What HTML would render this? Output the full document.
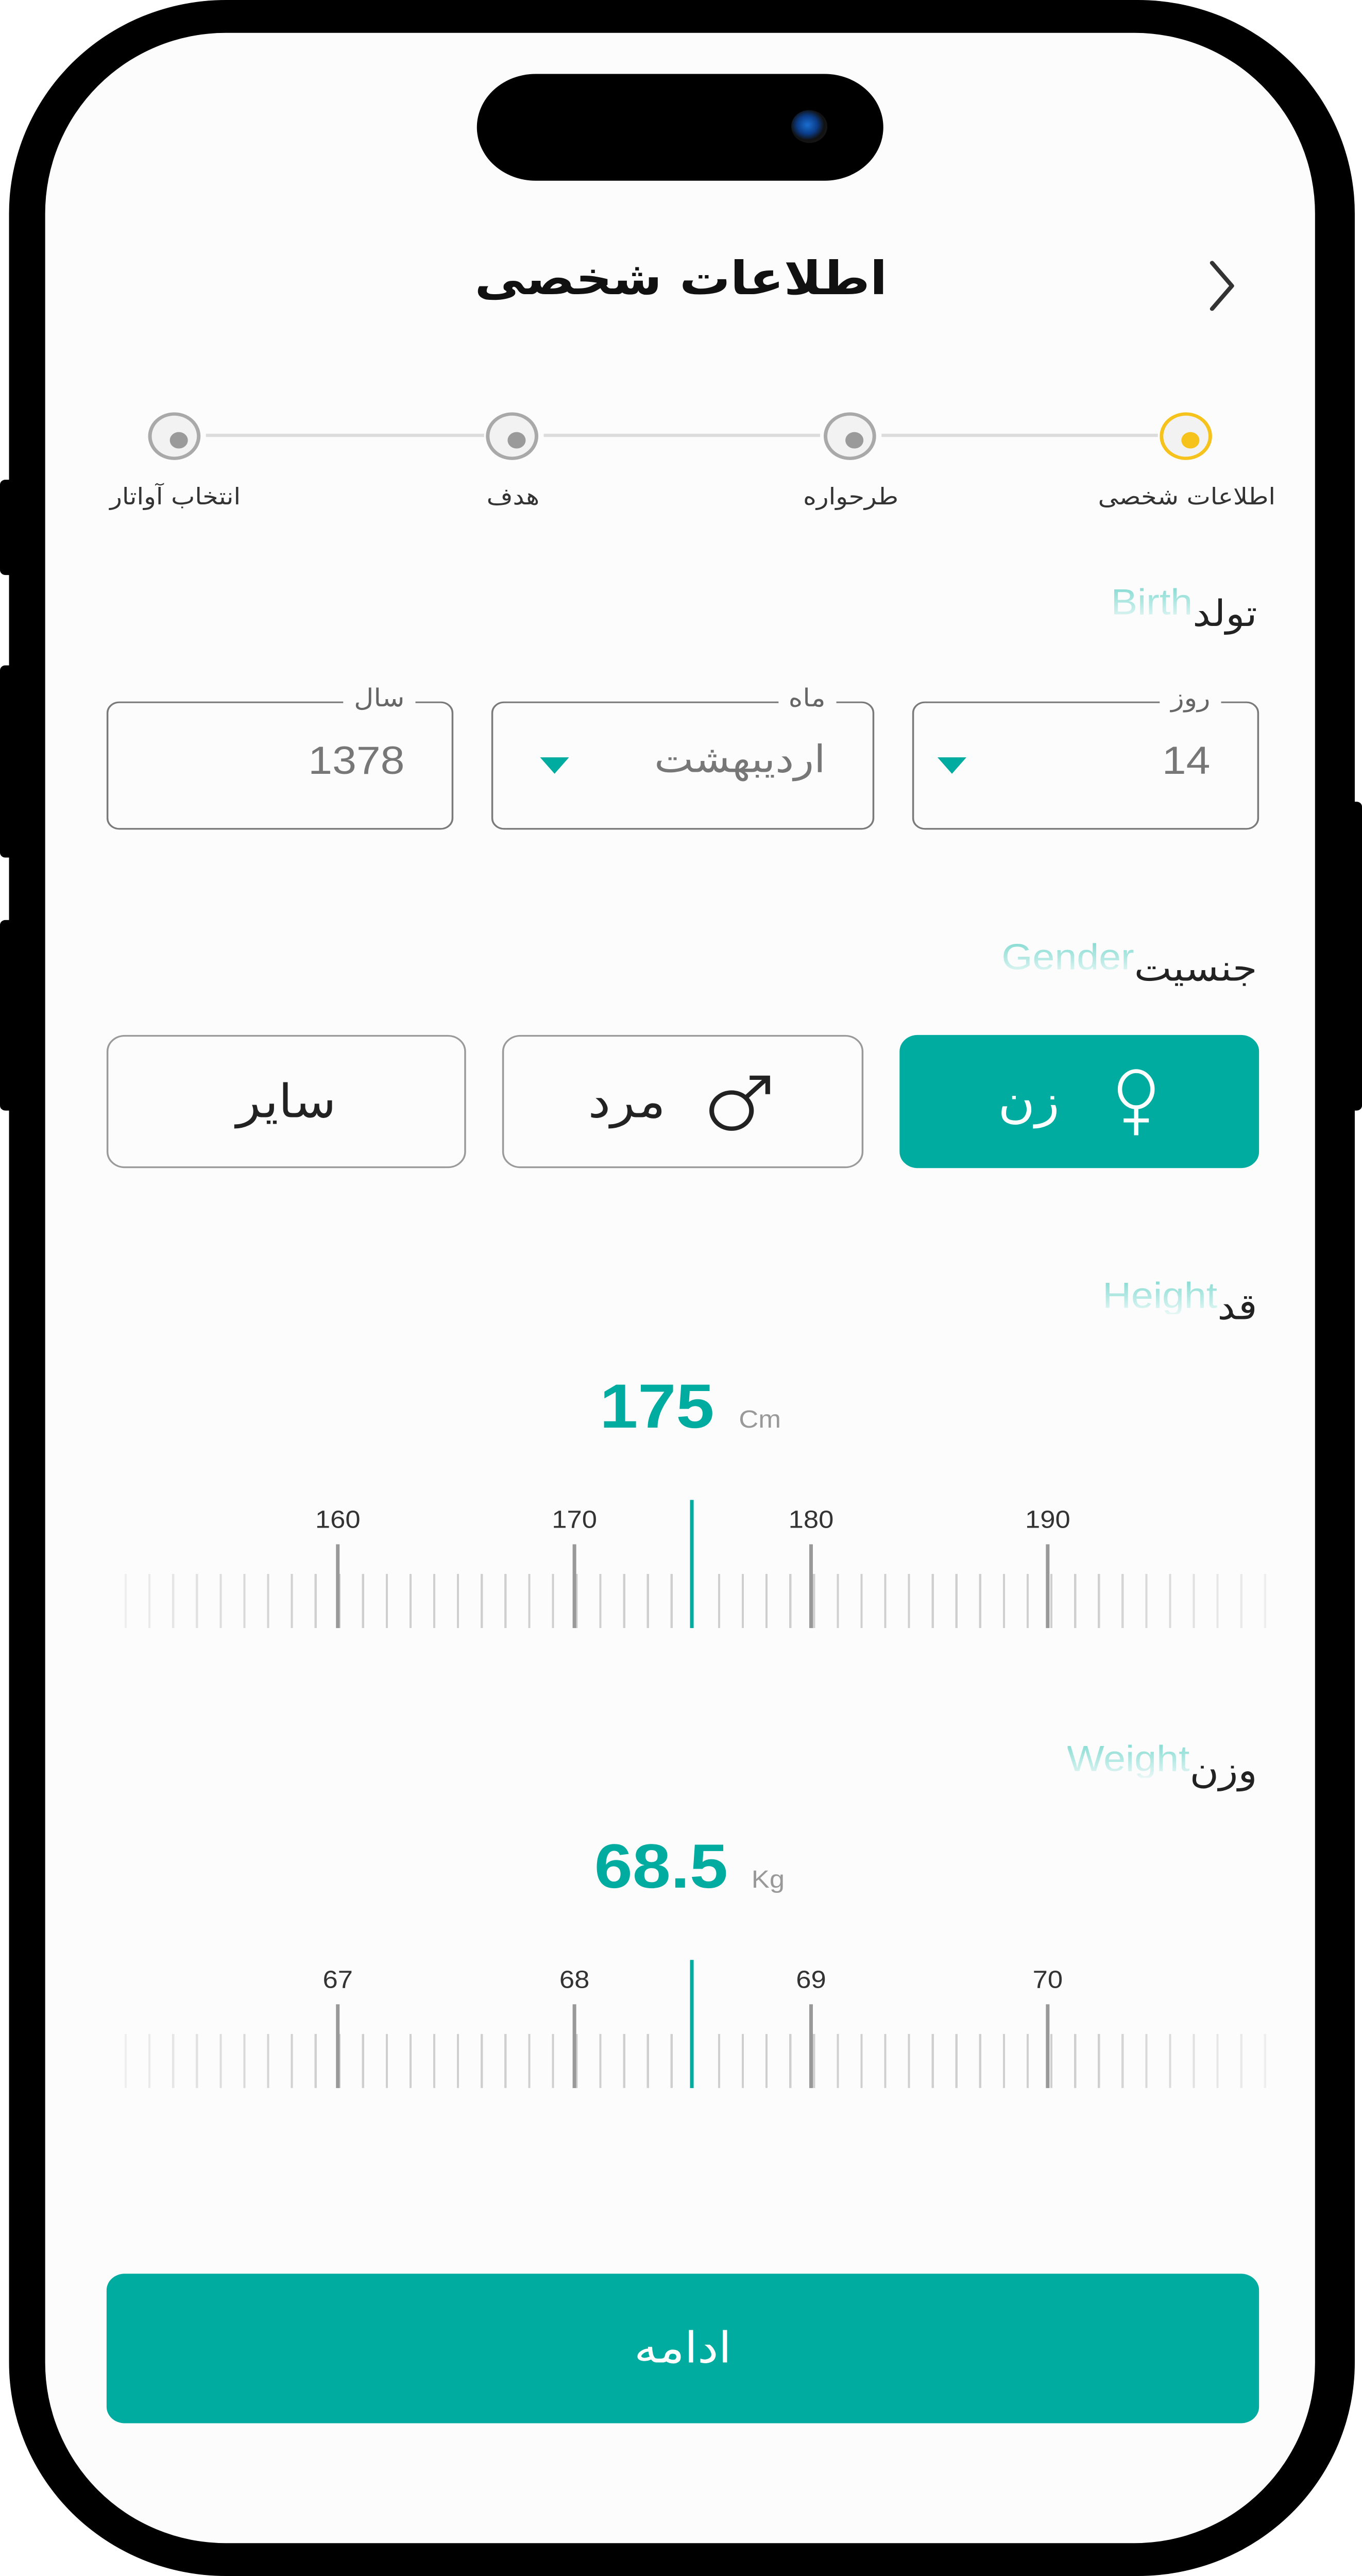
<!DOCTYPE html>
<html><head><meta charset="utf-8"><style>
html,body{margin:0;padding:0;background:#fff;width:100vw;height:100vh;overflow:hidden}
#wrap{position:relative;width:100vw;height:100vh;overflow:hidden}
#s{position:absolute;left:0;top:0;width:754px;height:1568px;transform:scale(3.5066);transform-origin:0 0;font-family:"DejaVu Sans","Liberation Sans",sans-serif}
.a{position:absolute}
.phone{left:5px;top:0;width:745px;height:1568px;background:#000;border-radius:120px/130px}
.screen{left:25px;top:20px;width:703px;height:1528px;background:#fcfcfc;border-radius:100px/110px}
.btn{background:#000;border-radius:3px}
.t{white-space:nowrap;line-height:1}
.step{width:29px;height:29px;border-radius:50%;border:2px solid #a9a9a9;background:#f2f2f2;box-sizing:border-box}
.step i{position:absolute;left:9.5px;top:9.5px;width:10px;height:10px;border-radius:50%;background:#9a9a9a}
.line{height:2px;background:#dcdcdc;top:264px}
.lbl{font-size:14px;color:#333;top:296px;transform:translateX(50%)}
.hd{right:58px;display:flex;flex-direction:row-reverse;align-items:flex-start;white-space:nowrap;line-height:1}
.hd .ar{font-size:22px;color:#222;margin-top:8px}
.en{font-family:"Liberation Sans",sans-serif;font-size:22px;background:linear-gradient(180deg,#7fd9d0,rgba(200,240,236,.4));-webkit-background-clip:text;color:transparent}
.box{border:1.6px solid #7a7a7a;border-radius:7px;height:78px;top:427px;box-sizing:border-box}
.bl{font-size:15px;color:#666;top:-10px;background:#fcfcfc;padding:0 6px}
.bv{font-family:"Liberation Sans","DejaVu Sans",sans-serif;font-size:24px;color:#777;top:24px}
.tri{width:0;height:0;border-left:8px solid transparent;border-right:8px solid transparent;border-top:10px solid #00ab9f;top:33px}
.g{top:630px;height:81px;border:1.6px solid #9a9a9a;border-radius:10px;box-sizing:border-box;font-size:28px;color:#222;display:flex;align-items:center;justify-content:center}
.ruler{left:69px;width:633px;height:33px;background:repeating-linear-gradient(90deg,#cfcfcf 0,#cfcfcf 1.2px,transparent 1.2px,transparent 13.14px);-webkit-mask-image:linear-gradient(90deg,rgba(0,0,0,.3),#000 15%,#000 85%,rgba(0,0,0,.3))}
.maj{width:1.5px;height:51px;background:#999}
.num{font-family:"Liberation Sans",sans-serif;font-size:15px;color:#333;transform:translateX(-50%)}
.ctr{width:2px;height:78px;background:#00ab9f}
.big{font-family:"Liberation Sans",sans-serif;font-weight:bold;font-size:38px;color:#00ab9f}
.unit{font-family:"Liberation Sans",sans-serif;font-size:15px;color:#999}
</style></head><body><div id="wrap"><div id="s">
<div class="a btn" style="left:0;top:292px;width:8px;height:58px"></div>
<div class="a btn" style="left:0;top:405px;width:8px;height:117px"></div>
<div class="a btn" style="left:0;top:560px;width:8px;height:116px"></div>
<div class="a btn" style="left:746px;top:488px;width:8px;height:188px"></div>
<div class="a phone"></div>
<div class="a screen"></div>
<div class="a" style="left:264px;top:45px;width:225px;height:65px;background:#000;border-radius:33px"></div>
<div class="a" style="left:438px;top:67px;width:20px;height:20px;border-radius:50%;background:radial-gradient(circle at 45% 45%,#1a6fd0 0,#0b3d8a 35%,#111 60%,#222 100%)"></div>

<svg class="a" style="left:665px;top:156px" width="26" height="36" viewBox="0 0 26 36"><path d="M6 4 L17 18 L6 32" fill="none" stroke="#333" stroke-width="2.4" stroke-linecap="round" stroke-linejoin="round"/></svg>
<div class="a t" style="left:0;width:754px;top:156px;text-align:center;font-size:28px;font-weight:bold;color:#111;direction:rtl">اطلاعات شخصی</div>

<div class="a line" style="left:114px;width:154px"></div>
<div class="a line" style="left:301px;width:153px"></div>
<div class="a line" style="left:488px;width:153px"></div>
<div class="a step" style="left:82px;top:251px"><i></i></div>
<div class="a step" style="left:269px;top:251px"><i></i></div>
<div class="a step" style="left:456px;top:251px"><i></i></div>
<div class="a step" style="left:642px;top:251px;border-color:#f6c21c"><i style="background:#f6c21c"></i></div>
<div class="a t lbl" style="right:657px;direction:rtl">انتخاب آواتار</div>
<div class="a t lbl" style="right:470px">هدف</div>
<div class="a t lbl" style="right:283px">طرحواره</div>
<div class="a t lbl" style="right:97px;direction:rtl">اطلاعات شخصی</div>

<div class="a hd" style="top:356px"><span class="ar">تولد</span><span class="en">Birth</span></div>

<div class="a box" style="left:59px;width:192px"><span class="a t bl" style="right:20px">سال</span><span class="a t bv" style="right:26px">1378</span></div>
<div class="a box" style="left:272px;width:212px"><span class="a t bl" style="right:20px">ماه</span><span class="a t bv" style="right:26px;font-family:'DejaVu Sans',sans-serif;font-size:23px">اردیبهشت</span><div class="a tri" style="left:26px"></div></div>
<div class="a box" style="left:505px;width:192px"><span class="a t bl" style="right:20px">روز</span><span class="a t bv" style="right:26px">14</span><div class="a tri" style="left:13px"></div></div>

<div class="a hd" style="top:572px"><span class="ar">جنسیت</span><span class="en">Gender</span></div>

<div class="a g" style="left:59px;width:199px">سایر</div>
<div class="a g" style="left:278px;width:200px"><span style="margin-right:22px">مرد</span><svg width="40" height="40" viewBox="0 0 40 40"><circle cx="15" cy="25" r="11" fill="none" stroke="#222" stroke-width="2.6"/><path d="M23 17 L35 5 M25 5 L35 5 L35 15" fill="none" stroke="#222" stroke-width="2.6"/></svg></div>
<div class="a g" style="left:498px;width:199px;background:#00ab9f;border-color:#00ab9f;color:#fff"><span style="margin-right:28px">زن</span><svg width="28" height="44" viewBox="0 0 28 44"><ellipse cx="14" cy="14" rx="9" ry="11" fill="none" stroke="#fff" stroke-width="2.4"/><path d="M14 25 V42 M7 33 H21" stroke="#fff" stroke-width="2.4"/></svg></div>

<div class="a hd" style="top:778px"><span class="ar">قد</span><span class="en">Height</span></div>
<div class="a t big" style="left:332px;top:838px">175</div>
<div class="a t unit" style="left:409px;top:857px">Cm</div>
<div class="a ruler" style="top:958px"></div>
<div class="a maj" style="left:186px;top:940px"></div><div class="a maj" style="left:317px;top:940px"></div><div class="a maj" style="left:448px;top:940px"></div><div class="a maj" style="left:579px;top:940px"></div>
<div class="a" style="left:380px;top:955px;width:7px;height:40px;background:#fcfcfc"></div>
<div class="a ctr" style="left:382px;top:913px"></div>
<div class="a t num" style="left:187px;top:918px">160</div><div class="a t num" style="left:318px;top:918px">170</div><div class="a t num" style="left:449px;top:918px">180</div><div class="a t num" style="left:580px;top:918px">190</div>

<div class="a hd" style="top:1060px"><span class="ar">وزن</span><span class="en">Weight</span></div>
<div class="a t big" style="left:329px;top:1118px">68.5</div>
<div class="a t unit" style="left:416px;top:1137px">Kg</div>
<div class="a ruler" style="top:1238px"></div>
<div class="a maj" style="left:186px;top:1220px"></div><div class="a maj" style="left:317px;top:1220px"></div><div class="a maj" style="left:448px;top:1220px"></div><div class="a maj" style="left:579px;top:1220px"></div>
<div class="a" style="left:380px;top:1235px;width:7px;height:40px;background:#fcfcfc"></div>
<div class="a ctr" style="left:382px;top:1193px"></div>
<div class="a t num" style="left:187px;top:1198px">67</div><div class="a t num" style="left:318px;top:1198px">68</div><div class="a t num" style="left:449px;top:1198px">69</div><div class="a t num" style="left:580px;top:1198px">70</div>

<div class="a" style="left:59px;top:1384px;width:638px;height:91px;background:#00ab9f;border-radius:10px;color:#fff;font-size:26px;display:flex;align-items:center;justify-content:center">ادامه</div>
</div></div>
<script>
(function(){var w=window.innerWidth,h=window.innerHeight;var sx=w>100?w/754:3.5066;var sy=h>100?h/1568:sx;document.getElementById('s').style.transform='scale('+sx+','+sy+')';})();
</script>
</body></html>
